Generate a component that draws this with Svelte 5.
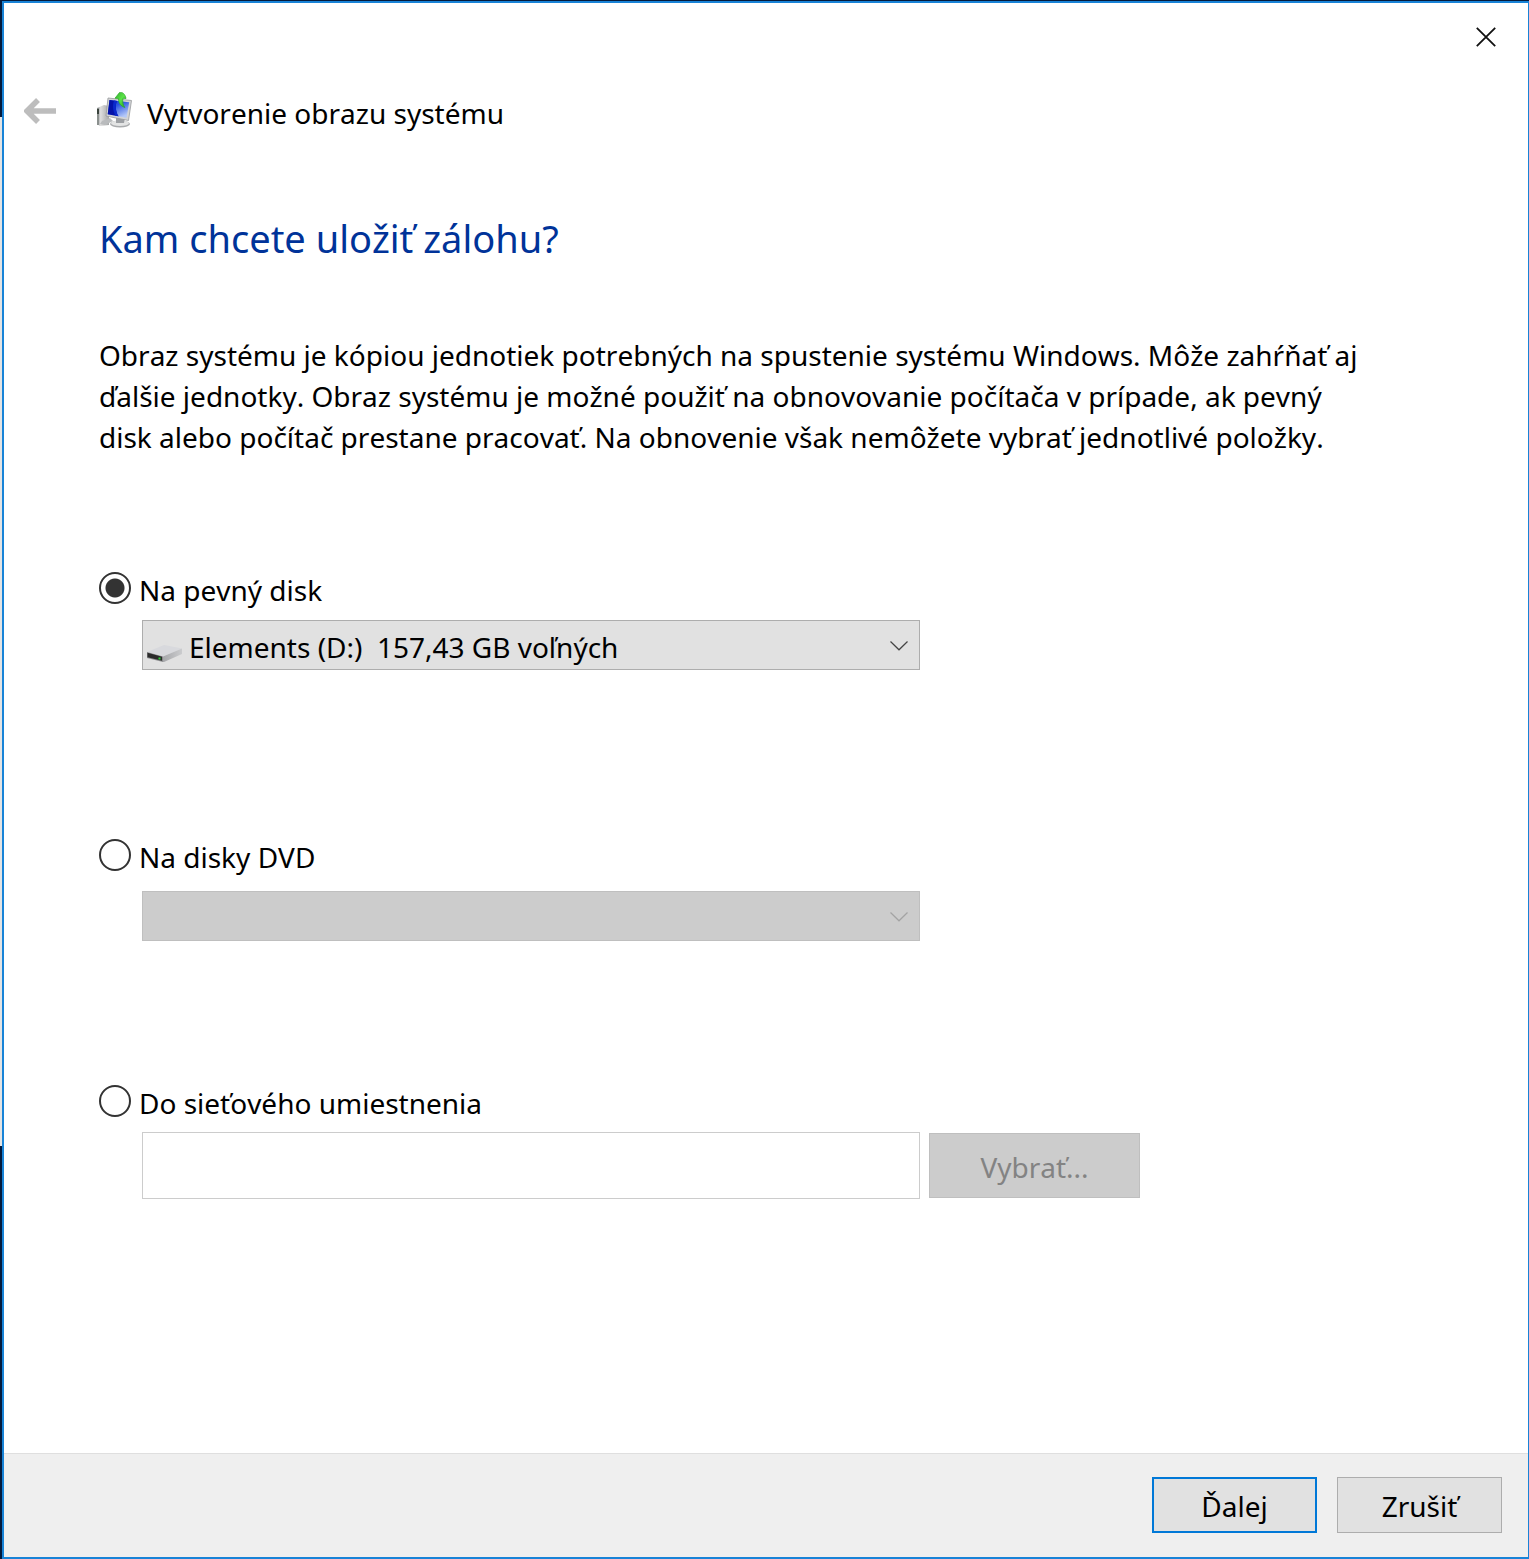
<script>
  let target = $state('disk');
  let drive = $state('D');
  let networkPath = $state('');
</script>

<div class="desktop">
  <main class="window">
    <div class="titlebar">
      <button class="close" type="button" aria-label="Zavrieť">
        <svg width="20" height="20" viewBox="0 0 20 20">
          <path d="M.8.8 19.2 19.2M19.2.8.8 19.2" fill="none" stroke="#111" stroke-width="1.800" />
        </svg>
      </button>
    </div>

    <header class="header">
      <button class="back" type="button" aria-label="Späť" disabled>
        <svg width="32" height="26" viewBox="0 0 32 26">
          <path d="M32 13H4M14 2 3 13l11 11" fill="none" stroke="#bdbdbd" stroke-width="5.5" />
        </svg>
      </button>
      <svg class="app-icon" width="36" height="38" viewBox="0 0 36 38" aria-hidden="true">
        <defs>
          <linearGradient id="screen" x1="0" y1="0" x2="0.6" y2="1">
            <stop offset="0" stop-color="#1a3fd0" />
            <stop offset="0.4" stop-color="#2a55e0" />
            <stop offset="1" stop-color="#b4c8f8" />
          </linearGradient>
          <linearGradient id="tower" x1="0" y1="0" x2="1" y2="0">
            <stop offset="0" stop-color="#8b8f90" />
            <stop offset="0.3" stop-color="#dedede" />
            <stop offset="1" stop-color="#a5a7a8" />
          </linearGradient>
          <linearGradient id="leaf" x1="0" y1="0" x2="1" y2="1">
            <stop offset="0" stop-color="#2fae2b" />
            <stop offset="0.5" stop-color="#5be348" />
            <stop offset="1" stop-color="#22a322" />
          </linearGradient>
        </defs>
        <path d="M0 16 7 13l5 1v19l-9 1-3-2z" fill="url(#tower)" />
        <path d="M0 16h2v17H0z" fill="#8b908e" />
        <path d="M0 17h2v5H0z" fill="#39433c" />
        <path d="M5 29l8-3 3 3-8 4-5-1z" fill="#b9bbbd" />
        <ellipse cx="23" cy="32" rx="10" ry="3.500" fill="#a9abad" />
        <ellipse cx="23" cy="31.300" rx="9" ry="2.800" fill="#e3e4e4" />
        <path d="M19 26h9l-1 5h-8z" fill="#9da0a4" />
        <path d="M11 6 34.500 8.500 31.500 28.500 9 24z" fill="#d3d4d6" stroke="#97999c" stroke-width="0.800" />
        <path d="M12.500 8 32.200 10.300 29.500 25.800 10.700 22.200z" fill="url(#screen)" />
        <path d="M12.500 8 20 8.900C18 13 18.500 19 21.500 24.300L10.700 22.200z" fill="#0412a8" />
        <path d="M17 8.500 20 8.900C18 13 18.500 19 21.500 24.300L18.500 23.700C15.500 18 15.500 13 17 8.500z" fill="#0a28cc" />
        <path d="M22.500.500C25 0 27 1 28.500 4.500L29 6.500 26 6.300C25.300 9.500 25.800 12.500 27.800 15.500 23.500 14 21.500 11 21.500 6.500L18 6.200z" fill="url(#leaf)" stroke="#2aa528" stroke-width="0.700" />
      </svg>
      <span class="title">Vytvorenie obrazu systému</span>
    </header>

    <form class="content" onsubmit={(e) => e.preventDefault()}>
      <h1>Kam chcete uložiť zálohu?</h1>
      <p class="intro">
        Obraz systému je kópiou jednotiek potrebných na spustenie systému Windows. Môže zahŕňať aj
        ďalšie jednotky. Obraz systému je možné použiť na obnovovanie počítača v prípade, ak pevný
        disk alebo počítač prestane pracovať. Na obnovenie však nemôžete vybrať jednotlivé položky.
      </p>

      <section class="option disk">
        <label class="radio">
          <input type="radio" name="target" value="disk" bind:group={target} />
          <span>Na pevný disk</span>
        </label>
        <div class="combo">
          <select bind:value={drive} aria-label="Pevný disk">
            <option value="D">Elements (D:)&nbsp;&nbsp;157,43 GB voľných</option>
          </select>
          <svg class="drive" width="38" height="20" viewBox="0 0 38 20" aria-hidden="true">
            <defs>
              <linearGradient id="side" x1="0" y1="0" x2="1" y2="0">
                <stop offset="0" stop-color="#a6a7aa" />
                <stop offset="1" stop-color="#cbccce" />
              </linearGradient>
            </defs>
            <path d="M1 9 18 2l18 3.500-19 8z" fill="#d8d9dd" />
            <path d="M1 9 17 13.500v5.500L1 15z" fill="#8a8b8d" />
            <path d="M1.500 9.800 16 13.800v4L1.500 14.200z" fill="#2b2b2b" />
            <path d="M17 13.500 36 5.500v5.500L18 19h-1z" fill="url(#side)" />
            <path d="M12.500 14.500h2v2h-2z" fill="#2fd03a" />
          </svg>
          <svg class="chevron" width="18" height="10" viewBox="0 0 18 10" aria-hidden="true">
            <path d="M.5.5 9 8.800 17.500.5" fill="none" stroke="#444" stroke-width="1.200" />
          </svg>
        </div>
      </section>

      <section class="option dvd">
        <label class="radio">
          <input type="radio" name="target" value="dvd" bind:group={target} />
          <span>Na disky DVD</span>
        </label>
        <div class="combo">
          <select aria-label="Jednotka DVD" disabled></select>
          <svg class="chevron" width="18" height="10" viewBox="0 0 18 10" aria-hidden="true">
            <path d="M.5.5 9 8.800 17.500.5" fill="none" stroke="#a3a3a3" stroke-width="1.200" />
          </svg>
        </div>
      </section>

      <section class="option network">
        <label class="radio">
          <input type="radio" name="target" value="network" bind:group={target} />
          <span>Do sieťového umiestnenia</span>
        </label>
        <div class="path-row">
          <input class="path" type="text" bind:value={networkPath} aria-label="Sieťové umiestnenie" disabled />
          <button class="btn browse" type="button" disabled>Vybrať...</button>
        </div>
      </section>
    </form>

    <footer class="footer">
      <button class="btn primary" type="button">Ďalej</button>
      <button class="btn" type="button">Zrušiť</button>
    </footer>
  </main>
</div>

<style>
  :global(body) {
    margin: 0;
  }

  .desktop {
    box-sizing: border-box;
    min-height: 100vh;
    display: flex;
    padding: 1px 0 0 2px;
    background: linear-gradient(#031a3c 117px, #e4e4e4 117px, #e4e4e4 1146px, #031a3c 1146px);
    font-family: 'Noto Sans', 'Open Sans', sans-serif;
    font-size: 28px;
    font-kerning: none;
    color: #000;
  }

  .window {
    flex: 1;
    display: flex;
    flex-direction: column;
    border: 2px solid #1883d7;
    border-right-width: 1px;
    background: #fff;
  }

  button, select, input {
    font: inherit;
    font-kerning: inherit;
    color: inherit;
    box-sizing: border-box;
  }

  svg {
    display: block;
  }

  .titlebar {
    display: flex;
    justify-content: flex-end;
    height: 68px;
  }

  .close, .back {
    display: flex;
    align-items: center;
    justify-content: center;
    padding: 0;
    border: none;
    background: none;
  }

  .close {
    width: 84px;
  }

  .header {
    display: flex;
    align-items: center;
    height: 80px;
    padding-left: 20px;
  }

  .app-icon {
    margin-left: 41px;
  }

  .title {
    margin-left: 14px;
    padding-top: 4px;
    line-height: 40px;
  }

  .content {
    flex: 1;
    padding: 63px 96px 0 95px;
  }

  h1 {
    margin: 0;
    font-size: 38px;
    font-weight: 400;
    line-height: 48px;
    color: #003399;
  }

  .intro {
    max-width: 1272px;
    margin: 73px 0 112px;
    line-height: 41px;
  }

  .radio {
    display: inline-flex;
    align-items: center;
    gap: 8px;
    line-height: 32px;
  }

  .radio span {
    padding-top: 4px;
  }

  .radio input {
    appearance: none;
    width: 32px;
    height: 32px;
    margin: 0;
    border: 2px solid #333;
    border-radius: 50%;
    background: #fff;
  }

  .radio input:checked {
    background: radial-gradient(circle, #333 9px, #fff 10px);
  }

  .option {
    display: flex;
    flex-direction: column;
    align-items: flex-start;
  }

  .combo {
    position: relative;
    width: 778px;
    max-width: 100%;
    margin: 14px 0 0 43px;
  }

  .combo select {
    appearance: none;
    display: block;
    width: 100%;
    height: 50px;
    padding: 3px 40px 0 46px;
    border: 1px solid #adadad;
    border-radius: 0;
    background: #e1e1e1;
    opacity: 1;
  }

  .combo select:disabled {
    border-color: #bfbfbf;
    background: #ccc;
  }

  .drive {
    position: absolute;
    left: 4px;
    bottom: 7px;
    pointer-events: none;
  }

  .chevron {
    position: absolute;
    right: 12px;
    top: 21px;
    pointer-events: none;
  }

  .dvd {
    margin-top: 167px;
  }

  .dvd .combo {
    margin-top: 18px;
  }

  .network {
    margin-top: 142px;
  }

  .path-row {
    display: flex;
    align-items: center;
    gap: 9px;
    margin: 13px 0 0 43px;
  }

  .path {
    width: 778px;
    height: 67px;
    padding: 0 8px;
    border: 1px solid #ccc;
    background: #fff;
  }

  .btn {
    width: 165px;
    height: 56px;
    padding: 2px 0 0;
    border: 1px solid #adadad;
    background: #e1e1e1;
  }

  .btn.primary {
    border: 2px solid #0078d7;
  }

  .btn.browse {
    width: 211px;
    height: 65px;
    border-color: #bfbfbf;
    background: #ccc;
    color: #838383;
  }

  .footer {
    display: flex;
    justify-content: flex-end;
    gap: 20px;
    padding: 23px 26px 24px;
    border-top: 1px solid #dfdfdf;
    background: #efefef;
  }
</style>
